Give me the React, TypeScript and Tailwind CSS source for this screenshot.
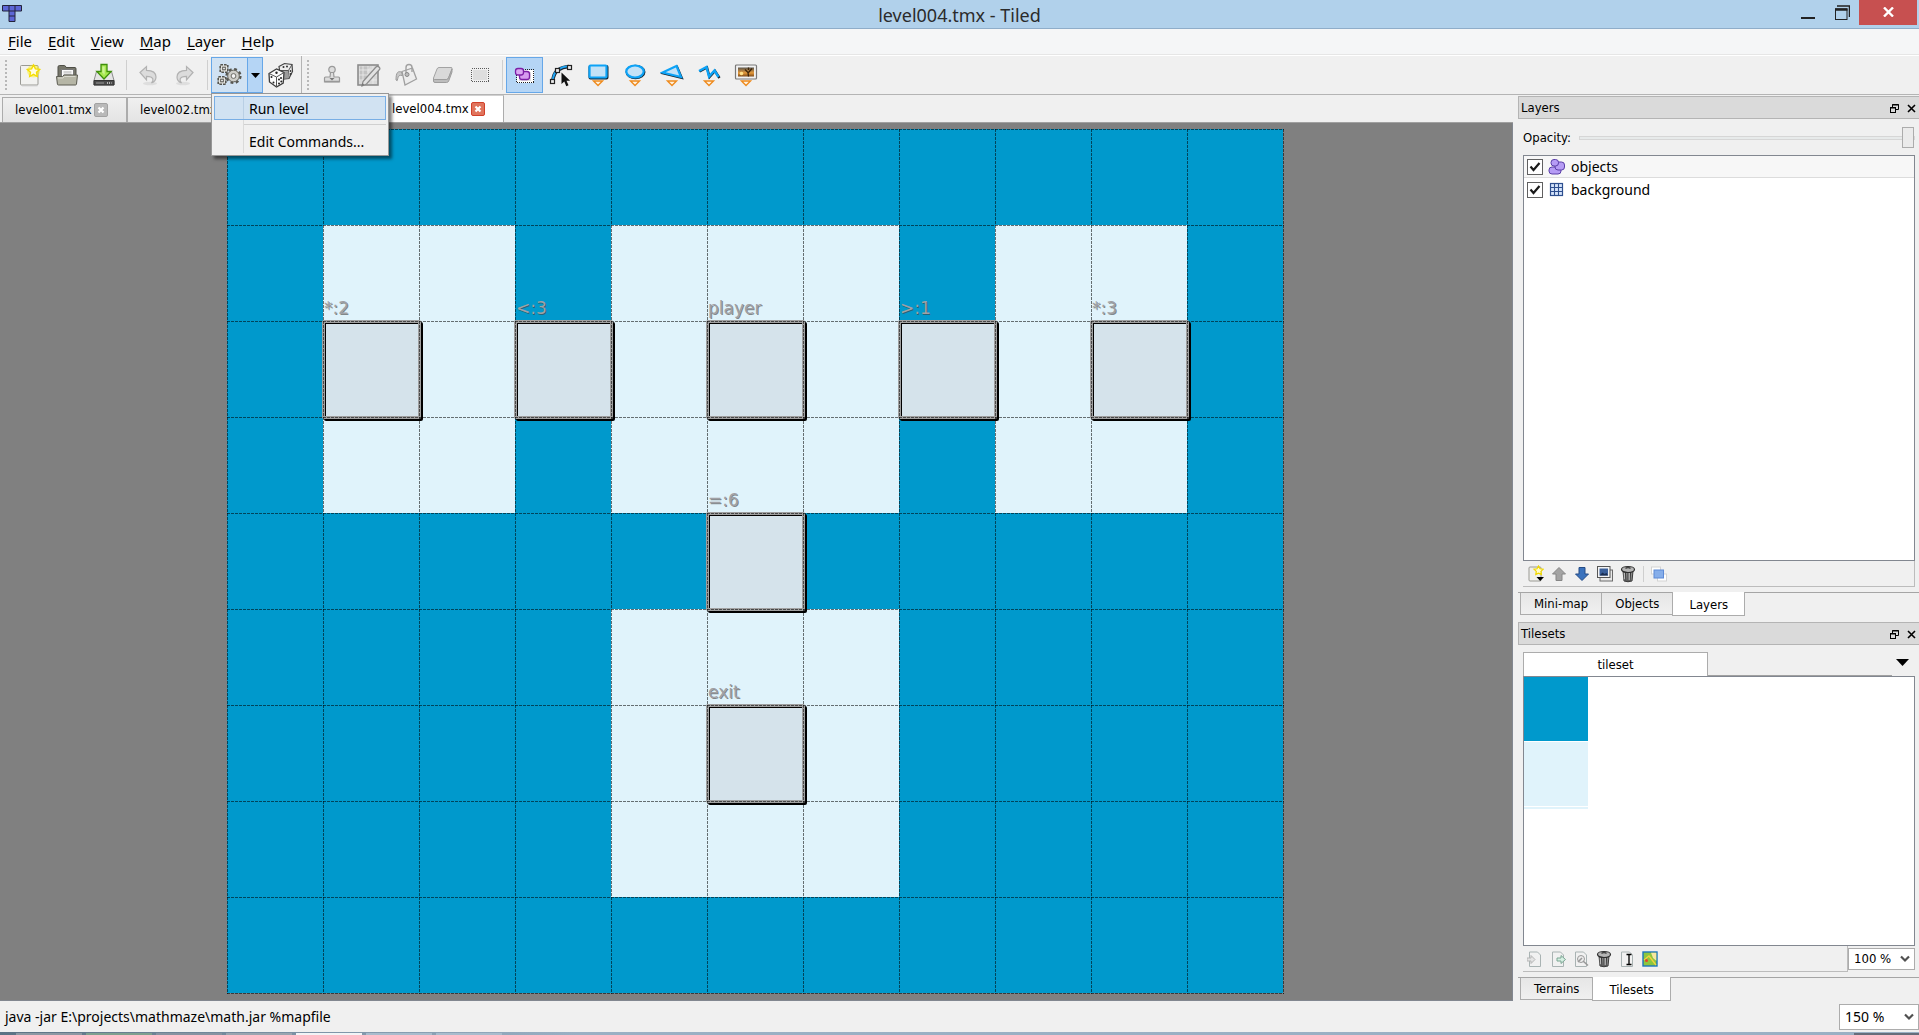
import React, { useState } from 'react';
import clsx from 'clsx';

const menuItems = ['File', 'Edit', 'View', 'Map', 'Layer', 'Help'];

// # is a wall tile, . is a floor tile
const tiles = [
  '###########',
  '#..#...#..#',
  '#.........#',
  '#..#...#..#',
  '#####.#####',
  '####...####',
  '####...####',
  '####...####',
  '###########',
];

const CELL = 96;

const mapObjects = [
  { name: '*:2', col: 1, row: 2 },
  { name: '<:3', col: 3, row: 2 },
  { name: 'player', col: 5, row: 2 },
  { name: '>:1', col: 7, row: 2 },
  { name: '*:3', col: 9, row: 2 },
  { name: '=:6', col: 5, row: 4 },
  { name: 'exit', col: 5, row: 6 },
];

/* ---------- toolbar icons ---------- */

const Star = () => (
  <>
    <circle cx="15.5" cy="8" r="6.5" fill="#fff200" opacity="0.45" />
    <path d="M15.5 2l1.9 3.9 4.2.5-3.1 2.9.8 4.2-3.8-2.1-3.8 2.1.8-4.2-3.1-2.9 4.2-.5z" fill="#fffde0" stroke="#f5dd00" strokeWidth="1.4" />
  </>
);

const NewIcon = () => (
  <svg width="24" height="24" viewBox="0 0 24 24">
    <rect x="2.5" y="2.5" width="17.5" height="19.5" rx="1" fill="#f2f2f0" stroke="#9a9a94" />
    <path d="M4 22.8h15.5" stroke="#c9c9c9" />
    <Star />
  </svg>
);

const OpenIcon = () => (
  <svg width="24" height="24" viewBox="0 0 24 24">
    <path d="M3 20V4q0-1.5 1.5-1.5h5q1 0 1.5 2h9q1 0 1 1.5V20z" fill="#76766a" stroke="#4e4e46" />
    <path d="M6.5 6.5h12v9h-12z" fill="#fbfbfb" stroke="#777" />
    <path d="M8.5 9h8M8.5 11.2h8" stroke="#aaa" />
    <path d="M1.5 13.5h6l1.5-1.5h13.5l-1 9q-.2 1-1 1h-17q-1 0-1.1-1z" fill="#b6b6a6" stroke="#5c5c52" />
    <path d="M3 15h5l1.5-1.5h11" stroke="#d9d9cf" fill="none" />
  </svg>
);

const SaveIcon = () => (
  <svg width="24" height="24" viewBox="0 0 24 24">
    <path d="M4.5 8.5h15l2.5 9v4.5h-20v-4.5z" fill="#e4e4e4" stroke="#8a8a8a" />
    <path d="M2 17.5h20v4.5h-20z" fill="#4c4c4c" stroke="#333" />
    <path d="M4 20h8" stroke="#999" />
    <path d="M15 20h4.5" stroke="#ddd" strokeWidth="1.5" strokeDasharray="1 1" />
    <path d="M9 1.5h6v7h4.2L12 16 4.8 8.5H9z" fill="#a6e84e" stroke="#3f8f0c" strokeWidth="1.3" />
    <path d="M11 3.5v6.5M12 3.5v8" stroke="#d9f7ac" />
  </svg>
);

const UndoIcon = ({ flip = false }: { flip?: boolean }) => (
  <svg width="24" height="24" viewBox="0 0 24 24" className={flip ? '-scale-x-100' : ''}>
    <ellipse cx="14" cy="20.5" rx="7" ry="1.8" fill="#dedede" />
    <path d="M4 9.5l6.5-6v3.8c6.5 0 9.5 2.7 9.5 6.8 0 3-1.8 5-4.5 5.9 1.4-1.5 1.7-3 1.3-4.2-.7-2-2.8-2.5-6.3-2.5v3.7z" fill="#dcdcdc" stroke="#b2b2b2" strokeWidth="1.2" />
  </svg>
);

const GearsIcon = () => (
  <svg width="26" height="24" viewBox="0 0 26 24">
    <circle cx="16.5" cy="13" r="6.4" fill="#c4c4be" stroke="#55554f" strokeWidth="3.4" strokeDasharray="2.6 2.4" />
    <circle cx="16.5" cy="13" r="5.8" fill="#cdcdc8" stroke="#6b6b65" />
    <circle cx="16.5" cy="13" r="2.4" fill="#f4f4f4" stroke="#6b6b65" />
    {[[7, 5.5], [5, 17.5]].map(([x, y]) => (
      <g key={y}>
        <rect x={x - 3.6} y={y - 3.6} width="7.2" height="7.2" fill="#dcdcd7" stroke="#55554f" strokeWidth="2" strokeDasharray="2.6 1" />
        <rect x={x - 3} y={y - 3} width="6" height="6" fill="#e4e4df" />
        <rect x={x - 1.3} y={y - 1.3} width="2.6" height="2.6" fill="#fff" stroke="#55554f" />
      </g>
    ))}
  </svg>
);

const DiceIcon = () => (
  <svg width="27" height="26" viewBox="0 0 27 26">
    <path d="M12 4.5L17.5 1.5l7.5 1 .5 7-3.5 7-6 .5-3-6z" fill="#eee" stroke="#444" strokeWidth="1.2" />
    <path d="M12 8.5h9.5l3.5-6M21.5 8.5l.5 8" fill="none" stroke="#555" />
    <path d="M14.5 9.5l6.5-.5.8 7-5.5.5z" fill="#9b9b9b" />
    <circle cx="16.5" cy="5" r="1" fill="#333" />
    <circle cx="20" cy="4.5" r="1" fill="#333" />
    <circle cx="23.5" cy="9" r=".9" fill="#333" />
    <circle cx="23.5" cy="12" r=".9" fill="#333" />
    <path d="M2 11.5l7.5-4.5 7.5 3.5-.8 10.5-6.7 4-7-5z" fill="#fdfdfd" stroke="#3c3c3c" strokeWidth="1.3" />
    <path d="M2 11.5l7.5 3.5 7.5-4.5M9.5 15v10" fill="none" stroke="#555" />
    <circle cx="9.5" cy="10.8" r="1.2" fill="#222" />
    <circle cx="4.5" cy="15" r="1" fill="#222" />
    <circle cx="6.5" cy="20.5" r="1" fill="#222" />
    <circle cx="12" cy="17.5" r="1" fill="#222" />
    <circle cx="14" cy="16" r="1" fill="#222" />
    <circle cx="12" cy="21.5" r="1" fill="#222" />
    <circle cx="14.3" cy="19.5" r="1" fill="#222" />
  </svg>
);

const StampIcon = () => (
  <svg width="24" height="24" viewBox="0 0 24 24">
    <circle cx="12" cy="6.5" r="3.2" fill="#dcdcdc" stroke="#999" strokeWidth="1.2" />
    <path d="M10.5 9.5h3l.5 4.5h4.5q1 0 1 1v4h-15v-4q0-1 1-1H10z" fill="#dcdcdc" stroke="#999" strokeWidth="1.2" />
    <path d="M5 18.5h14" stroke="#999" strokeWidth="1.5" />
    <path d="M9.5 15h5L12 17.5z" fill="#777" />
  </svg>
);

const TerrainIcon = () => (
  <svg width="26" height="24" viewBox="0 0 26 24">
    <rect x="2" y="2" width="20" height="20" fill="#d8d8d8" stroke="#8c8c8c" strokeWidth="1.6" />
    <path d="M4 3.5h10l-3 5 2 4-4 5H4z" fill="#c2c2c2" />
    <path d="M7 3v18M12 3v18M17 3v18M3 7h18M3 12h18M3 17h18" stroke="#ececec" strokeWidth=".8" />
    <path d="M7 18.5L20 4q1.5-1.500 3 0t.5 2.500L10.500 21l-4.500 2z" fill="#e2e2e2" stroke="#8c8c8c" strokeWidth="1.2" />
    <path d="M5.5 23l1-3 2 2z" fill="#777" />
  </svg>
);

const BucketIcon = () => (
  <svg width="26" height="24" viewBox="0 0 26 24">
    <path d="M9 8.5L19.5 5l4 11L12 22z" fill="#ededed" stroke="#a0a0a0" strokeWidth="1.3" />
    <path d="M8.5 9C5 8 3 9 3 17q1.5 2 1.8-1.5.2-4 4.7-3z" fill="#c9c9c9" stroke="#9b9b9b" />
    <path d="M13 11V4.5q0-3 3-3t3 3V9" fill="none" stroke="#a0a0a0" strokeWidth="1.4" />
    <circle cx="14" cy="11.5" r="2" fill="#bcbcbc" stroke="#888" />
  </svg>
);

const EraserIcon = () => (
  <svg width="24" height="24" viewBox="0 0 24 24">
    <path d="M8 4.5h12q1.5 0 1 1.5l-3.5 9q-.6 1.5-2 1.5h-12q-1.5 0-1-1.5l3.5-9q.6-1.5 2-1.5z" fill="#d9d9d9" stroke="#a3a3a3" />
    <path d="M2.5 15.5v2.5q0 1.5 1.5 1.5h11.5q1.5 0 2.2-1.5L21 9V6l-3.5 9q-.6 1.5-2 1.5h-12z" fill="#bdbdbd" stroke="#9d9d9d" />
  </svg>
);

const SelectIcon = () => (
  <svg width="24" height="24" viewBox="0 0 24 24" shapeRendering="crispEdges">
    <rect x="5" y="7" width="14" height="10" fill="#dedede" />
    <rect x="3.5" y="5.5" width="17" height="13" fill="none" stroke="#5a5a5a" strokeDasharray="1 1" />
  </svg>
);

const SelectObjectsIcon = () => (
  <svg width="24" height="24" viewBox="0 0 24 24">
    <rect x="4.5" y="6.5" width="17" height="13" fill="#fff" stroke="#222" strokeDasharray="1 1" shapeRendering="crispEdges" />
    <rect x="7" y="9" width="12" height="9" fill="#e2e2e2" />
    <rect x="7.5" y="8.5" width="10" height="8" rx="2.5" fill="#d79cf0" stroke="#7d1fa6" strokeWidth="1.3" />
    <rect x="3.5" y="5.5" width="8" height="6.5" rx="2.5" fill="#dba6f3" stroke="#7d1fa6" strokeWidth="1.3" />
  </svg>
);

const EditPolyIcon = () => (
  <svg width="26" height="26" viewBox="0 0 26 26">
    <path d="M4.5 20q1-9 5.5-12T21 4.5" fill="none" stroke="#1a2a35" strokeWidth="3.4" />
    <path d="M4.5 19.5q1-9 5.5-12T21 4" fill="none" stroke="#1fa5f5" strokeWidth="2" />
    {[[2.5, 17.5], [7.5, 6.5], [19.5, 3.5]].map(([x, y]) => (
      <rect key={x} x={x} y={y} width="4" height="4" fill="#ececec" stroke="#222" strokeWidth="1.2" />
    ))}
    <path d="M13.5 10.5v11.5l2.8-2.4 2 4.6 2.2-1-2-4.4h3.6z" fill="#111" />
  </svg>
);

const InsertMark = () => (
  <path d="M7.5 18h9L12 22.5z" fill="#fff2df" stroke="#ee8a1d" strokeWidth="1.4" />
);

const InsertRectIcon = () => (
  <svg width="24" height="24" viewBox="0 0 24 24">
    <rect x="3.5" y="3" width="18" height="12.5" rx="1" fill="none" stroke="#152530" strokeWidth="2" />
    <rect x="3.5" y="2.5" width="17" height="12" rx="1" fill="#c3e2f7" stroke="#0da3f7" strokeWidth="2.2" />
    <InsertMark />
  </svg>
);

const InsertEllipseIcon = () => (
  <svg width="24" height="24" viewBox="0 0 24 24">
    <ellipse cx="12.5" cy="9" rx="9" ry="6.3" fill="none" stroke="#152530" strokeWidth="2" />
    <ellipse cx="12" cy="8.5" rx="8.7" ry="6" fill="#c3e2f7" stroke="#0da3f7" strokeWidth="2.2" />
    <InsertMark />
  </svg>
);

const InsertPolygonIcon = () => (
  <svg width="24" height="24" viewBox="0 0 24 24">
    <path d="M17 3.5l5 11.5L3 10.5z" fill="none" stroke="#152530" strokeWidth="2" />
    <path d="M16.5 3l4.5 11L2.5 9.5z" fill="#c3e2f7" stroke="#0da3f7" strokeWidth="2.2" />
    <InsertMark />
  </svg>
);

const InsertPolylineIcon = () => (
  <svg width="24" height="24" viewBox="0 0 24 24">
    <path d="M2.5 8.5L10 4.5l2.5 9.5 5.5-6 4.5 7" fill="none" stroke="#152530" strokeWidth="2.4" />
    <path d="M2 8L9.5 4l2.5 9.5 5.5-6 4 6.5" fill="none" stroke="#0da3f7" strokeWidth="2.4" />
    <InsertMark />
  </svg>
);

const InsertTileIcon = () => (
  <svg width="24" height="24" viewBox="0 0 24 24">
    <defs>
      <linearGradient id="sunset" x1="0" y1="0" x2="0" y2="1">
        <stop offset="0" stopColor="#5a564e" />
        <stop offset="0.6" stopColor="#e79a3a" />
        <stop offset="1" stopColor="#7c4a1a" />
      </linearGradient>
    </defs>
    <rect x="1.5" y="2" width="21" height="14" rx="1" fill="#f2f2f2" stroke="#787878" strokeWidth="1.2" />
    <rect x="4" y="4.5" width="16" height="9" fill="url(#sunset)" />
    <path d="M14.5 13.5l-.5-4-3-3M14.5 9.5l3.5-4M14.5 7V4.5" fill="none" stroke="#3c2408" strokeWidth="1.3" />
    <circle cx="7.5" cy="10.5" r="1.8" fill="#ffe18a" />
    <InsertMark />
  </svg>
);

/* ---------- dock icons ---------- */

const TrashIcon = () => (
  <svg width="16" height="18" viewBox="0 0 16 18">
    <path d="M3 6h10l-1 10q-4 1.5-8 0z" fill="#8b8b8b" stroke="#3a3a3a" />
    <path d="M5.5 7l.5 9M8 7v9.5M10.5 7L10 16" stroke="#333" />
    <path d="M4.3 8v6M9.2 8v7" stroke="#d8d8d8" strokeWidth=".8" />
    <ellipse cx="8" cy="4.5" rx="6.5" ry="3" fill="#b5b5b5" stroke="#2e2e2e" strokeWidth="1.2" />
    <path d="M5.5 3.5q2.5-2 5 0" fill="none" stroke="#444" strokeWidth="1.3" />
  </svg>
);

const ArrowIcon = ({ fill, stroke, down = false }: { fill: string; stroke: string; down?: boolean }) => (
  <svg width="16" height="18" viewBox="0 0 16 18" className={down ? 'rotate-180' : ''}>
    <path d="M8 2.5l6.5 6.5H11v6.5H5V9H1.5z" fill={fill} stroke={stroke} />
  </svg>
);

const NewLayerIcon = () => (
  <svg width="16" height="18" viewBox="0 0 16 18">
    <rect x="1" y="2" width="12" height="14" rx="1" fill="#efefec" stroke="#9a9a94" />
    <path d="M10.5 1l1.5 2.8 3.2.4-2.3 2.2.5 3-2.9-1.3-2.7 1.3.5-3L6 4.2l3-.4z" fill="#fffbd0" stroke="#f0d800" strokeWidth="1.2" />
    <path d="M8.5 12H16L12.2 16z" fill="#000" />
  </svg>
);

const DuplicateIcon = () => (
  <svg width="16" height="18" viewBox="0 0 16 18">
    <rect x="3" y="5" width="12.5" height="11" fill="#e9e9e9" stroke="#6b6b6b" />
    <rect x=".5" y="1.5" width="12.5" height="11" fill="#f4f4f4" stroke="#555" />
    <rect x="2.5" y="3.5" width="8.5" height="7" fill="#3a5f9a" />
    <path d="M2.5 10.5l3-3 2 1.5 2-1 1.5 2.5z" fill="#1c2f52" />
  </svg>
);

const HighlightLayerIcon = () => (
  <svg width="16" height="18" viewBox="0 0 16 18">
    <rect x=".5" y="2" width="9" height="7" fill="#fff" stroke="#d3d3d3" />
    <rect x="6.5" y="9" width="9" height="7" fill="#fff" stroke="#d3d3d3" />
    <rect x="3" y="5" width="9.5" height="8" fill="#86aeea" stroke="#5d8ad6" />
  </svg>
);

const PageIcon = ({ children }: { children: React.ReactNode }) => (
  <svg width="16" height="18" viewBox="0 0 16 18">
    <path d="M2.5 2h8l3 3v11.5h-11z" fill="#f1f1f1" stroke="#a9b3b3" />
    {children}
  </svg>
);

const ObjectLayerIcon = () => (
  <svg width="18" height="18" viewBox="0 0 18 18">
    <rect x="1" y="9" width="12" height="7" rx="3" fill="#b69cf5" stroke="#5a3ea8" />
    <rect x="7" y="4" width="9.5" height="8" rx="3" fill="#b69cf5" stroke="#5a3ea8" />
    <rect x="3" y="1.5" width="7.5" height="6.5" rx="3" fill="#b69cf5" stroke="#5a3ea8" />
  </svg>
);

const TileLayerIcon = () => (
  <svg width="18" height="18" viewBox="0 0 18 18">
    <rect x="2.5" y="2.5" width="12" height="12" fill="#d5e4fb" stroke="#2e4f8f" strokeWidth="1.2" />
    <path d="M6.5 2.5v12M10.5 2.5v12M2.5 6.5h12M2.5 10.5h12" stroke="#2e4f8f" strokeWidth="1.1" />
  </svg>
);

/* ---------- building blocks ---------- */

type ToolProps = { label: string; children: React.ReactNode; active?: boolean };

const Tool = ({ label, children, active = false }: ToolProps) => (
  <button
    aria-label={label}
    className={clsx('w-[37px] h-9 pr-[2px] flex items-center justify-center border', active ? 'bg-[#b5d5f5] border-[#66a7e8]' : 'border-transparent')}
  >
    {children}
  </button>
);

const Grip = () => <div className="w-1 h-8 ml-1 mr-1 bg-[radial-gradient(circle,#b8b8b8_1px,transparent_1px)] bg-[size:4px_4px]" />;
const Sep = () => <div className="w-px h-[30px] mx-[3px] bg-[#cfcfcf]" />;

const CloseGlyph = ({ active = false }: { active?: boolean }) => (
  <svg width="14" height="14" viewBox="0 0 14 14">
    <rect x=".5" y=".5" width="13" height="13" rx="1.5" fill={active ? '#e0745c' : '#b9b9b9'} stroke={active ? '#d1402a' : '#a2a2a2'} />
    <path d="M4.5 4.5l5 5M9.5 4.5l-5 5" stroke="#fff" strokeWidth="2.2" />
  </svg>
);

const FileTab = ({ name, active = false }: { name?: string; active?: boolean }) => (
  <div
    className={clsx(
      'flex items-center gap-1 border border-b-0 border-[#acacac]',
      active ? 'w-[127px] pl-[14px] h-[27px] bg-white border-t-[#d0d0d0]' : 'w-[125px] pl-3 h-[25px] bg-linear-to-b from-[#f0f0f0] to-[#e4e4e4]',
    )}
  >
    {name && (
      <>
        <button className="w-[75px] text-left whitespace-nowrap">{name}</button>
        <button aria-label={`Close ${name}`}><CloseGlyph active={active} /></button>
      </>
    )}
  </div>
);

const DockTitle = ({ title }: { title: string }) => (
  <div className="h-[23px] shrink-0 flex items-center pt-px pl-[2px] pr-[3px] bg-[#dadada] border border-r-0 border-[#b4b4b4]">
    <h2 className="flex-1">{title}</h2>
    <button aria-label={`Float ${title}`} className="mr-2">
      <svg width="9" height="9" viewBox="0 0 9 9" fill="none" stroke="#000">
        <path d="M2.5 3V.5h6v5H6" />
        <path d="M2 1h7" />
        <rect x=".5" y="3.5" width="5" height="5" />
        <path d="M0 4h6" />
      </svg>
    </button>
    <button aria-label={`Close ${title}`}>
      <svg width="9" height="9" viewBox="0 0 9 9" stroke="#000" strokeWidth="1.6">
        <path d="M1 1l7 7M8 1L1 8" />
      </svg>
    </button>
  </div>
);

const DockTabs = ({ tabs, active }: { tabs: string[]; active: string }) => (
  <div className="flex items-start pl-[2px] h-6 shrink-0 border-t border-[#a5a5a5]">
    {tabs.map((t) => (
      <button
        key={t}
        className={clsx(
          'border border-t-0 border-[#acacac]',
          t === active ? 'h-6 -mt-px px-4 pt-[2px] bg-white' : 'h-[22px] px-[13px] border-r-0 bg-linear-to-b from-[#e6e6e6] to-[#f0f0f0]',
        )}
      >
        {t}
      </button>
    ))}
  </div>
);

const Zoom = ({ label, value, className }: { label: string; value: string; className: string }) => (
  <div className={clsx('grid items-center bg-white border border-[#acacac]', className)}>
    <select aria-label={label} defaultValue={value} className="[grid-area:1/1] w-full appearance-none outline-none pl-[5px]">
      <option>{value}</option>
      <option>200 %</option>
    </select>
    <svg width="10" height="8" viewBox="0 0 10 8" className="[grid-area:1/1] justify-self-end mr-1 pointer-events-none">
      <path d="M1 1.5l4 4 4-4" fill="none" stroke="#505050" strokeWidth="2.2" />
    </svg>
  </div>
);

const LayerRow = ({ name, icon, selected = false }: { name: string; icon: React.ReactNode; selected?: boolean }) => (
  <label className={clsx('h-[22px] flex items-center pt-px pl-[3px] gap-[5px] font-["Noto_Sans",sans-serif] text-sm', selected && 'bg-[#f7f7f7] border-b border-[#dcdcdc]')}>
    <span className="grid">
      <input type="checkbox" defaultChecked className="peer [grid-area:1/1] appearance-none size-4 bg-white border border-[#606060]" />
      <svg width="16" height="16" viewBox="0 0 16 16" className="[grid-area:1/1] hidden peer-checked:block pointer-events-none">
        <path d="M3.5 7.5l3 3.5 6-7" fill="none" stroke="#1a1a1a" strokeWidth="2.2" />
      </svg>
    </span>
    {icon}
    <span>{name}</span>
  </label>
);

const MapView = () => (
  <div className="relative shrink-0 w-[1057px] h-[865px]">
    <div className="grid grid-cols-[repeat(11,96px)] auto-rows-[96px]">
      {tiles.join('').split('').map((t, i) => (
        <div key={i} className={t === '#' ? 'bg-[#0099cc]' : 'bg-[#e0f3fb]'} />
      ))}
    </div>
    {/* outlines are centred on the grid lines, hence the -1 */}
    {mapObjects.map((o) => (
      <div key={o.name} className="absolute" style={{ left: o.col * CELL - 1, top: o.row * CELL - 1 }}>
        <span className="absolute left-[2px] bottom-full text-[17px] leading-6 text-[#a0a0a4] [text-shadow:1px_1px_0_#40404099]">
          {o.name}
        </span>
        <div className="size-[99px] rounded-[2px] bg-[#d5e3eb] border-[3px] border-[#a0a0a0] shadow-[2px_2px_0_#000,inset_1px_1px_0_#000]" />
      </div>
    ))}
    <svg className="absolute inset-0 pointer-events-none" width="1057" height="865" shapeRendering="crispEdges" stroke="#000" strokeOpacity="0.55" strokeDasharray="3 1">
      {Array.from({ length: 12 }, (_, i) => (
        <path key={`v${i}`} d={`M${i * CELL + 0.5} 0V865`} />
      ))}
      {Array.from({ length: 10 }, (_, i) => (
        <path key={`h${i}`} d={`M0 ${i * CELL + 0.5}H1057`} />
      ))}
    </svg>
  </div>
);

export default function App() {
  const [opacity, setOpacity] = useState(100);

  return (
    <div className='h-screen flex flex-col overflow-hidden bg-[#f0f0f0] text-black text-[13px] leading-4 font-["DejaVu_Sans_Condensed","DejaVu_Sans",sans-serif]'>
      {/* title bar */}
      <header className="h-[29px] shrink-0 grid grid-cols-[1fr_auto_1fr] items-start bg-[#b1d1eb] border-b border-[#8fadc9]">
        <svg width="20" height="17" viewBox="0 0 20 17" className="ml-[2px] mt-[5px]" fill="#5c66d6" stroke="#23233a">
          <path d="M.5.5h19v5.5h-6.5v10.5h-6V6H.5z" />
          <path d="M7 .5V6M13 .5V6M7 6h6M7 11h6" />
        </svg>
        <h1 className='font-["Noto_Sans",sans-serif] text-lg leading-7 pt-px text-[#2b2b2b]'>level004.tmx - Tiled</h1>
        <div className="flex justify-end">
          <button aria-label="Minimize" className="mr-5">
            <svg width="14" height="20" viewBox="0 0 14 20"><path d="M0 15h14" stroke="#222" strokeWidth="2" /></svg>
          </button>
          <button aria-label="Restore" className="mr-[9px]">
            <svg width="15" height="20" viewBox="0 0 15 20" fill="none" stroke="#222">
              <path d="M2 3h12.5v11" strokeWidth="1.5" />
              <rect x=".5" y="6" width="11.5" height="10.5" />
              <path d="M0 6.5h12.5" strokeWidth="2.5" />
            </svg>
          </button>
          <button aria-label="Close" className="w-[58px] h-[25px] mr-[2px] pb-[2px] flex items-center justify-center bg-[#c75050]">
            <svg width="11" height="10" viewBox="0 0 11 10" stroke="#fff" strokeWidth="2.4"><path d="M1 .5l9 9M10 .5l-9 9" /></svg>
          </button>
        </div>
      </header>

      {/* menu bar */}
      <nav className='h-[26px] shrink-0 flex items-start pt-1 gap-4 pl-2 bg-[#f5f6f7] border-b border-[#e6e6e6] font-["Noto_Sans",sans-serif] text-[15px]'>
        {menuItems.map((m) => (
          <button key={m}><span className="underline underline-offset-2">{m[0]}</span>{m.slice(1)}</button>
        ))}
      </nav>

      {/* toolbar */}
      <div className="relative h-10 shrink-0 flex items-center border-t border-b border-t-white border-b-[#b4b4b4]">
        <Grip />
        <Tool label="New"><NewIcon /></Tool>
        <Tool label="Open"><OpenIcon /></Tool>
        <Tool label="Save"><SaveIcon /></Tool>
        <Sep />
        <Tool label="Undo"><UndoIcon /></Tool>
        <Tool label="Redo"><UndoIcon flip /></Tool>
        <Sep />
        <button aria-label="Run command" className="w-[37px] h-9 flex items-center justify-center bg-[#d0e2f3] border border-[#66a7e8]"><GearsIcon /></button>
        <button aria-label="Choose command" className="w-[15px] h-9 flex items-center justify-center bg-[#b5d5f5] border border-l-0 border-[#66a7e8]">
          <svg width="9" height="5" viewBox="0 0 9 5"><path d="M0 0h9L4.5 5z" /></svg>
        </button>
        <Tool label="Random mode"><DiceIcon /></Tool>
        <div className="w-px self-stretch ml-px bg-[#b4b4b4]" />
        <Grip />
        <Tool label="Stamp brush"><StampIcon /></Tool>
        <Tool label="Terrain brush"><TerrainIcon /></Tool>
        <Tool label="Bucket fill"><BucketIcon /></Tool>
        <Tool label="Eraser"><EraserIcon /></Tool>
        <Tool label="Rectangular select"><SelectIcon /></Tool>
        <Sep />
        <Tool label="Select objects" active><SelectObjectsIcon /></Tool>
        <Tool label="Edit polygons"><EditPolyIcon /></Tool>
        <Tool label="Insert rectangle"><InsertRectIcon /></Tool>
        <Tool label="Insert ellipse"><InsertEllipseIcon /></Tool>
        <Tool label="Insert polygon"><InsertPolygonIcon /></Tool>
        <Tool label="Insert polyline"><InsertPolylineIcon /></Tool>
        <Tool label="Insert tile"><InsertTileIcon /></Tool>

        {/* command menu */}
        <div role="menu" className='absolute z-10 left-[211px] top-[37px] w-[178px] p-[2px] flex flex-col bg-[#f0f0f0] border border-[#979797] shadow-[3px_3px_3px_#00000080] font-["Noto_Sans",sans-serif] text-sm'>
          <button role="menuitem" className="h-6 flex items-center border border-[#78aee5] bg-[#d1e2f2]">
            <span className="w-[29px] h-full border-r border-[#b9cfe4]" />
            <span className="pt-px pl-[5px]">Run level</span>
          </button>
          <div className="flex h-[9px] items-center">
            <span className="w-[30px] h-full border-r border-[#dadada]" />
            <span className="flex-1 h-px bg-[#d0d0d0]" />
          </div>
          <button role="menuitem" className="h-6 flex items-center">
            <span className="w-[30px] h-full border-r border-[#dadada]" />
            <span className="pt-px pl-[5px]">Edit Commands...</span>
          </button>
        </div>
      </div>

      <main className="flex-1 min-h-0 flex gap-[5px]">
        <section className="flex-1 min-w-0 flex flex-col">
          <div className="h-7 shrink-0 flex items-end pl-[2px] border-b border-[#a0a0a0]">
            <FileTab name="level001.tmx" />
            <FileTab name="level002.tmx" />
            <FileTab />
            <FileTab name="level004.tmx" active />
          </div>
          <div className="flex-1 min-h-0 flex justify-center pt-[6px] pr-px overflow-hidden bg-[#808080] border-r border-b border-[#828790] font-['DejaVu_Sans',sans-serif]">
            <MapView />
          </div>
        </section>

        <aside className="w-[401px] shrink-0 flex flex-col pt-px">
          <DockTitle title="Layers" />
          <div className="h-9 shrink-0 flex items-center pt-[2px] pl-[5px] pr-1 gap-2">
            <label htmlFor="opacity">Opacity:</label>
            <input
              id="opacity"
              type="range"
              value={opacity}
              onChange={(e) => setOpacity(Number(e.target.value))}
              className="flex-1 min-w-0 h-5 appearance-none bg-transparent [&::-webkit-slider-runnable-track]:h-1 [&::-webkit-slider-runnable-track]:bg-[#e7eaea] [&::-webkit-slider-runnable-track]:border [&::-webkit-slider-runnable-track]:border-[#d6d6d6] [&::-webkit-slider-thumb]:appearance-none [&::-webkit-slider-thumb]:w-3 [&::-webkit-slider-thumb]:h-[21px] [&::-webkit-slider-thumb]:-mt-[10px] [&::-webkit-slider-thumb]:bg-[#ebebeb] [&::-webkit-slider-thumb]:border [&::-webkit-slider-thumb]:border-[#acacac]"
            />
          </div>
          <div className="flex-1 min-h-0 ml-[5px] mr-1 bg-white border border-[#828790]">
            <LayerRow name="objects" icon={<ObjectLayerIcon />} selected />
            <LayerRow name="background" icon={<TileLayerIcon />} />
          </div>
          <div className="h-[26px] shrink-0 ml-[5px] mr-1 pl-[5px] flex items-center gap-[7px] border-b border-r border-[#bcbcbc]">
            <button aria-label="New layer"><NewLayerIcon /></button>
            <button aria-label="Raise layer"><ArrowIcon fill="#a3a3a3" stroke="#868686" /></button>
            <button aria-label="Lower layer"><ArrowIcon fill="#3a72bd" stroke="#244b85" down /></button>
            <button aria-label="Duplicate layer"><DuplicateIcon /></button>
            <button aria-label="Remove layer"><TrashIcon /></button>
            <div className="w-px h-4 bg-[#cfcfcf]" />
            <button aria-label="Highlight current layer"><HighlightLayerIcon /></button>
          </div>
          <div className="h-[5px] shrink-0" />
          <DockTabs tabs={['Mini-map', 'Objects', 'Layers']} active="Layers" />

          <div className="h-[6px] shrink-0" />
          <DockTitle title="Tilesets" />
          <div className="h-[31px] shrink-0 flex items-end ml-[5px] pr-[27px] relative">
            <button className="w-[185px] h-6 bg-white border border-b-0 border-[#acacac]">tileset</button>
            <div className="flex-1 h-px bg-[#a0a0a0]" />
            <button aria-label="Tileset menu" className="absolute right-[10px] bottom-[10px]">
              <svg width="13" height="7" viewBox="0 0 13 7"><path d="M0 0h13L6.5 7z" /></svg>
            </button>
          </div>
          <div className="h-[270px] shrink-0 ml-[5px] mr-1 flex flex-col gap-px bg-white border border-[#828790]">
            <div className="size-16 bg-[#0099cc]" />
            <div className="size-16 bg-[#e0f3fb]" />
            <div className="w-16 h-[2px] bg-[#e0f3fb]" />
          </div>
          <div className="h-[26px] shrink-0 ml-[5px] mr-1 flex">
            <div className="flex-1 pl-1 flex items-center gap-[7px] border-b border-r border-[#bcbcbc]">
              <button aria-label="Import tileset">
                <PageIcon><path d="M0 8h4V5.5L8 9.5l-4 4V11H0z" fill="#e3e3e3" stroke="#b5b5b5" /></PageIcon>
              </button>
              <button aria-label="Export tileset">
                <PageIcon><path d="M7 8h4V5.5l4.5 4-4.5 4V11H7z" fill="#d5efe2" stroke="#7aa592" /></PageIcon>
              </button>
              <button aria-label="Tileset properties">
                <PageIcon>
                  <circle cx="8" cy="9" r="3.5" fill="#ececec" stroke="#999" />
                  <path d="M10 11l5 4.5M5 12l4-4" stroke="#999" strokeWidth="1.6" />
                </PageIcon>
              </button>
              <button aria-label="Remove tileset"><TrashIcon /></button>
              <button aria-label="Rename tileset">
                <PageIcon><path d="M7.5 4.5h5M10 4.5v10M7.5 14.5h5" stroke="#000" strokeWidth="1.3" /></PageIcon>
              </button>
              <button aria-label="Edit terrain">
                <svg width="16" height="18" viewBox="0 0 16 18">
                  <rect x="1" y="2" width="14" height="14" fill="#8cc63f" stroke="#1b75bb" strokeWidth="1.4" />
                  <path d="M9 2.8h5.3v8L11 8z" fill="#f7e7a1" />
                  <path d="M2 10l5-4 7 9" fill="none" stroke="#f3d33c" strokeWidth="1.3" />
                  <circle cx="4.5" cy="10.5" r="1.5" fill="#e2452c" />
                </svg>
              </button>
            </div>
            <Zoom label="Tileset zoom" value="100 %" className="w-[67px] h-[22px] mt-[2px]" />
          </div>
          <div className="h-[5px] shrink-0" />
          <DockTabs tabs={['Terrains', 'Tilesets']} active="Tilesets" />
        </aside>
      </main>

      <footer className='h-[31px] shrink-0 flex items-center justify-between pl-[5px] font-["Noto_Sans",sans-serif] text-sm'>
        <span>java -jar E:\projects\mathmaze\math.jar %mapfile</span>
        <Zoom label="Map zoom" value="150 %" className="w-20 h-[26px]" />
      </footer>

      {/* top edge of the desktop taskbar */}
      <div className="h-[3px] shrink-0 flex gap-1 pl-4 pt-px bg-linear-to-r from-[#5b7284] via-[#9ab0c4] via-30% to-[#9ab0c4]">
        {['bg-[#8d98a3]', 'bg-[#7fa08f]', 'bg-[#8793a1]', 'bg-[#9aa5b0]', 'bg-[#f2f4f6]', 'bg-[#a9bccd]', 'bg-[#a9bccd]'].map((c, i) => (
          <div key={i} className={clsx('w-[66px] h-[2px]', c)} />
        ))}
        <div className="ml-auto w-[65px] h-[2px] bg-[#666d7a]" />
      </div>
    </div>
  );
}
